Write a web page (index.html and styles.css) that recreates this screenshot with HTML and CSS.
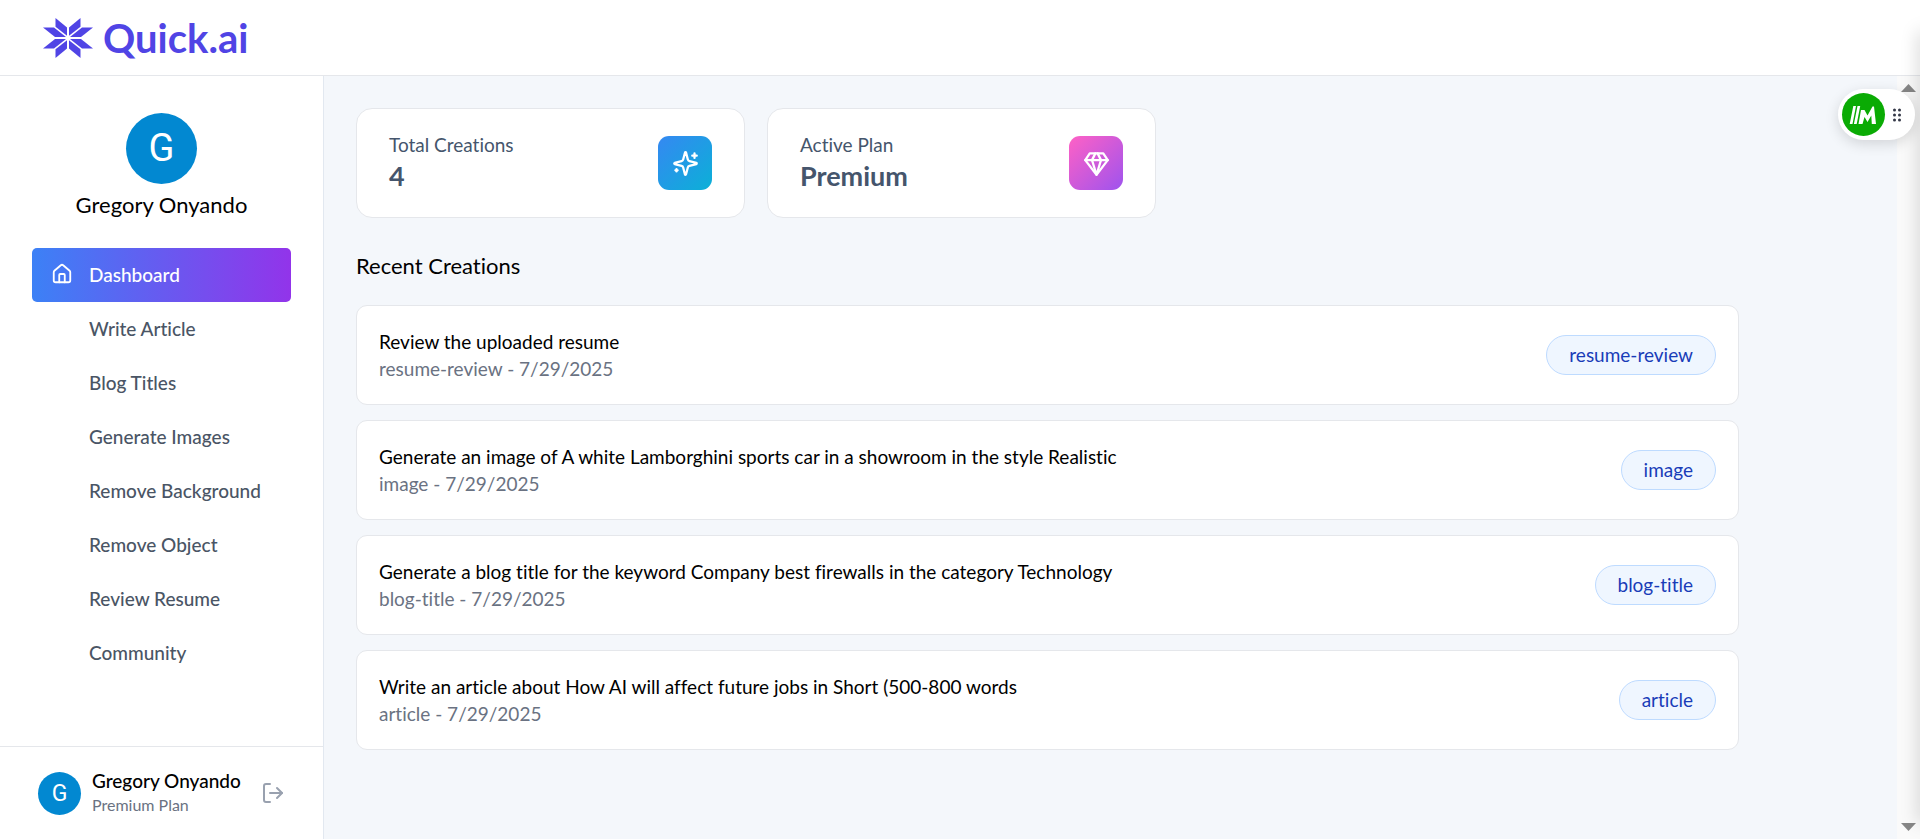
FILE: index.html
```html
<!DOCTYPE html>
<html lang="en">
<head>
<meta charset="utf-8">
<title>Quick.ai</title>
<link rel="stylesheet" href="styles.css">
</head>
<body>
<header class="topbar">
  <a class="brand" href="#">
    <svg class="brand-mark" viewBox="0 0 50 42" aria-hidden="true">
      <g id="q"><path d="M12.500 1 L24 10.500 V18.800 L12.500 9.700Z"/><path d="M0 10.500 H11 L23 20 H12Z"/></g>
      <use href="#q" transform="matrix(-1 0 0 1 50 0)"/>
      <use href="#q" transform="matrix(1 0 0 -1 0 42)"/>
      <use href="#q" transform="matrix(-1 0 0 -1 50 42)"/>
    </svg>
    <span class="brand-name">Quick.ai</span>
  </a>
</header>
<div class="shell">
  <aside class="sidebar">
    <div class="profile">
      <span class="avatar avatar-lg">G</span>
      <h1 class="profile-name">Gregory Onyando</h1>
    </div>
    <nav class="menu">
      <a class="menu-item active" href="#">
        <svg class="line-icon menu-icon" viewBox="0 0 24 24" aria-hidden="true"><path d="M15 21v-8a1 1 0 0 0-1-1h-4a1 1 0 0 0-1 1v8"/><path d="M3 10a2 2 0 0 1 .709-1.528l7-5.999a2 2 0 0 1 2.582 0l7 5.999A2 2 0 0 1 21 10v9a2 2 0 0 1-2 2H5a2 2 0 0 1-2-2z"/></svg>
        Dashboard</a>
      <a class="menu-item" href="#">Write Article</a>
      <a class="menu-item" href="#">Blog Titles</a>
      <a class="menu-item" href="#">Generate Images</a>
      <a class="menu-item" href="#">Remove Background</a>
      <a class="menu-item" href="#">Remove Object</a>
      <a class="menu-item" href="#">Review Resume</a>
      <a class="menu-item" href="#">Community</a>
    </nav>
    <div class="account">
      <span class="avatar avatar-sm">G</span>
      <div class="account-text">
        <p class="account-name">Gregory Onyando</p>
        <p class="account-plan">Premium Plan</p>
      </div>
      <button class="logout" type="button" aria-label="Log out">
        <svg class="line-icon" viewBox="0 0 24 24" aria-hidden="true"><path d="m16 17 5-5-5-5"/><path d="M21 12H9"/><path d="M9 21H5a2 2 0 0 1-2-2V5a2 2 0 0 1 2-2h4"/></svg>
      </button>
    </div>
  </aside>
  <main class="content">
    <section class="stats">
      <div class="stat">
        <div><p class="stat-label">Total Creations</p><p class="stat-value">4</p></div>
        <span class="stat-icon blue"><svg class="line-icon" viewBox="0 0 24 24" aria-hidden="true"><path d="M9.937 15.500A2 2 0 0 0 8.500 14.063l-6.135-1.582a.5.5 0 0 1 0-.962L8.500 9.936A2 2 0 0 0 9.937 8.500l1.582-6.135a.5.5 0 0 1 .963 0L14.063 8.500A2 2 0 0 0 15.500 9.937l6.135 1.581a.5.5 0 0 1 0 .964L15.500 14.063a2 2 0 0 0-1.437 1.437l-1.582 6.135a.5.5 0 0 1-.963 0z"/><path d="M20 3v4M22 5h-4M4 17v2M5 18H3"/></svg></span>
      </div>
      <div class="stat">
        <div><p class="stat-label">Active Plan</p><p class="stat-value">Premium</p></div>
        <span class="stat-icon pink"><svg class="line-icon" viewBox="0 0 24 24" aria-hidden="true"><path d="M6 3h12l4 6-10 13L2 9Z"/><path d="M11 3 8 9l4 13 4-13-3-6"/><path d="M2 9h20"/></svg></span>
      </div>
    </section>
    <section class="recent">
      <h2 class="recent-title">Recent Creations</h2>
      <article class="creation">
        <div><h3 class="creation-title">Review the uploaded resume</h3><p class="creation-meta">resume-review - 7/29/2025</p></div>
        <button class="tag" type="button">resume-review</button>
      </article>
      <article class="creation">
        <div><h3 class="creation-title">Generate an image of A white Lamborghini sports car in a showroom in the style Realistic</h3><p class="creation-meta">image - 7/29/2025</p></div>
        <button class="tag" type="button">image</button>
      </article>
      <article class="creation">
        <div><h3 class="creation-title">Generate a blog title for the keyword Company best firewalls in the category Technology</h3><p class="creation-meta">blog-title - 7/29/2025</p></div>
        <button class="tag" type="button">blog-title</button>
      </article>
      <article class="creation">
        <div><h3 class="creation-title">Write an article about How AI will affect future jobs in Short (500-800 words</h3><p class="creation-meta">article - 7/29/2025</p></div>
        <button class="tag" type="button">article</button>
      </article>
    </section>
  </main>
  <div class="scroll-track" aria-hidden="true">
    <svg class="scroll-arrow" viewBox="0 0 15 8"><path d="M0 8 7.500 0 15 8Z"/></svg>
    <svg class="scroll-arrow" viewBox="0 0 15 8"><path d="M0 0H15L7.500 8Z"/></svg>
  </div>
</div>
<div class="edge-shade"></div>
<div class="floating">
  <button class="floating-logo" type="button" aria-label="Open assistant">
    <svg viewBox="0 0 43 43" aria-hidden="true"><path d="M11.300 13h2.700L10.500 31H7.700ZM15.500 13h2.700L14.700 31h-2.800ZM19 17h3.500l3 5.500L30.500 13.500H32L34 31H29.800L29.300 22.500 25.500 29 22.500 24 20.500 31H16.500Z"/></svg>
  </button>
  <svg class="floating-grip" viewBox="0 0 8 14" aria-hidden="true"><g><circle cx="1.500" cy="2" r="1.500"/><circle cx="6.500" cy="2" r="1.500"/><circle cx="1.500" cy="7" r="1.500"/><circle cx="6.500" cy="7" r="1.500"/><circle cx="1.500" cy="12" r="1.500"/><circle cx="6.500" cy="12" r="1.500"/></g></svg>
</div>
</body>
</html>
```
FILE: styles.css
```css
* {
  box-sizing: border-box;
}

body {
  margin: 0;
  height: 100vh;
  display: flex;
  flex-direction: column;
  overflow: hidden;
  background: #fff;
  color: #000;
  font: 19px/27px Lato, "Liberation Sans", sans-serif;
  font-variant-ligatures: none;
}

h1, h2, h3, p {
  margin: 0;
  font-weight: 400;
}

a {
  color: inherit;
  text-decoration: none;
}

button {
  font: inherit;
  font-variant-ligatures: none;
  cursor: pointer;
}

.line-icon {
  fill: none;
  stroke: currentColor;
  stroke-width: 2;
  stroke-linecap: round;
  stroke-linejoin: round;
}

.topbar {
  flex: none;
  display: flex;
  align-items: center;
  height: 76px;
  padding: 0 43px;
  border-bottom: 1px solid #e5e7eb;
}

.brand {
  display: flex;
  align-items: center;
  gap: 10px;
  color: #5044e5;
}

.brand-mark {
  width: 50px;
  height: 42px;
  fill: currentColor;
}

.brand-name {
  font-size: 40px;
  line-height: 48px;
  font-weight: 700;
}

.shell {
  flex: 1;
  display: flex;
  min-height: 0;
}

.sidebar {
  flex: none;
  width: 324px;
  display: flex;
  flex-direction: column;
  border-right: 1px solid #e2e8f0;
}

.profile {
  display: flex;
  flex-direction: column;
  align-items: center;
  gap: 6px;
  padding-top: 37px;
}

.avatar {
  flex: none;
  display: flex;
  align-items: center;
  justify-content: center;
  border-radius: 50%;
  background: #0288d1;
  color: #fff;
  font-family: Roboto, sans-serif;
}

.avatar-lg {
  width: 71px;
  height: 71px;
  font-size: 38px;
}

.avatar-sm {
  width: 43px;
  height: 43px;
  font-size: 23px;
}

.profile-name {
  font-size: 22px;
  line-height: 30px;
}

.menu {
  flex: 1;
  padding: 28px 32px 0;
  color: #4a5565;
  font-weight: 500;
}

.menu-item {
  display: flex;
  align-items: center;
  height: 54px;
  padding-bottom: 2px;
  padding-left: 57px;
  border-radius: 5px;
}

.menu-item.active {
  gap: 16px;
  padding-left: 19px;
  background: linear-gradient(to right, #3c81f6, #9234ea);
  color: #fff;
}

.menu-icon {
  width: 22px;
  height: 22px;
}

.account {
  display: flex;
  align-items: center;
  gap: 11px;
  height: 93px;
  padding: 0 38px;
  border-top: 1px solid #e5e7eb;
}

.account-name {
  line-height: 24px;
  font-weight: 500;
  white-space: nowrap;
}

.account-plan {
  font-size: 16px;
  line-height: 24px;
  color: #6a7282;
}

.logout {
  display: flex;
  margin-left: auto;
  padding: 0;
  border: 0;
  background: none;
  color: #99a1af;
}

.logout svg {
  width: 24px;
  height: 24px;
}

.content {
  flex: 1;
  min-width: 0;
  padding: 32px;
  background: #f4f7fb;
}

.stats {
  display: flex;
  gap: 22px;
}

.stat {
  width: 389px;
  height: 110px;
  display: flex;
  align-items: center;
  justify-content: space-between;
  padding: 0 32px;
  border: 1px solid #e5e7eb;
  border-radius: 16px;
  background: #fff;
  color: #45556c;
}

.stat-value {
  padding-bottom: 2px;
  font-size: 27px;
  line-height: 36px;
  font-weight: 700;
}

.stat-icon {
  display: flex;
  align-items: center;
  justify-content: center;
  width: 54px;
  height: 54px;
  border-radius: 11px;
  color: #fff;
}

.stat-icon svg {
  width: 27px;
  height: 27px;
}

.blue {
  background: linear-gradient(to bottom right, #3588f2, #0bb0d7);
}

.pink {
  background: linear-gradient(to bottom right, #ff61c5, #9e53ee);
}

.recent {
  display: flex;
  flex-direction: column;
  gap: 15px;
  max-width: 1383px;
  margin-top: 32px;
}

.recent-title {
  margin-bottom: 9px;
  font-size: 22px;
  line-height: 31px;
}

.creation {
  display: flex;
  align-items: center;
  justify-content: space-between;
  gap: 18px;
  padding: 22px;
  border: 1px solid #e5e7eb;
  border-radius: 11px;
  background: #fff;
}

.creation-title,
.creation-meta {
  font-size: 19px;
  line-height: 27px;
}

.creation-meta {
  color: #6a7282;
}

.tag {
  flex: none;
  height: 40px;
  padding: 0 22px 2px;
  border: 1px solid #bedbff;
  border-radius: 20px;
  background: #eff6ff;
  color: #193cb8;
}

.scroll-track {
  flex: none;
  width: 23px;
  display: flex;
  flex-direction: column;
  align-items: center;
  justify-content: space-between;
  padding: 8px 0;
  background: #fafafa;
}

.scroll-arrow {
  width: 15px;
  height: 8px;
  fill: #878787;
}

.edge-shade {
  position: fixed;
  top: 32px;
  right: -8px;
  bottom: 16px;
  width: 8px;
  box-shadow: 0 0 18px rgba(0, 0, 0, 0.25);
}

.floating {
  position: fixed;
  top: 89px;
  right: 5px;
  display: flex;
  align-items: center;
  gap: 8px;
  height: 51px;
  padding: 0 14px 0 4px;
  border-radius: 26px;
  background: #fff;
  box-shadow: 0 4px 14px rgba(0, 0, 0, 0.14);
}

.floating-logo {
  width: 43px;
  height: 43px;
  padding: 0;
  border: 0;
  border-radius: 50%;
  background: #0aab04;
}

.floating-logo svg {
  display: block;
  fill: #fff;
}

.floating-grip {
  width: 8px;
  height: 14px;
  fill: #333746;
}
```
